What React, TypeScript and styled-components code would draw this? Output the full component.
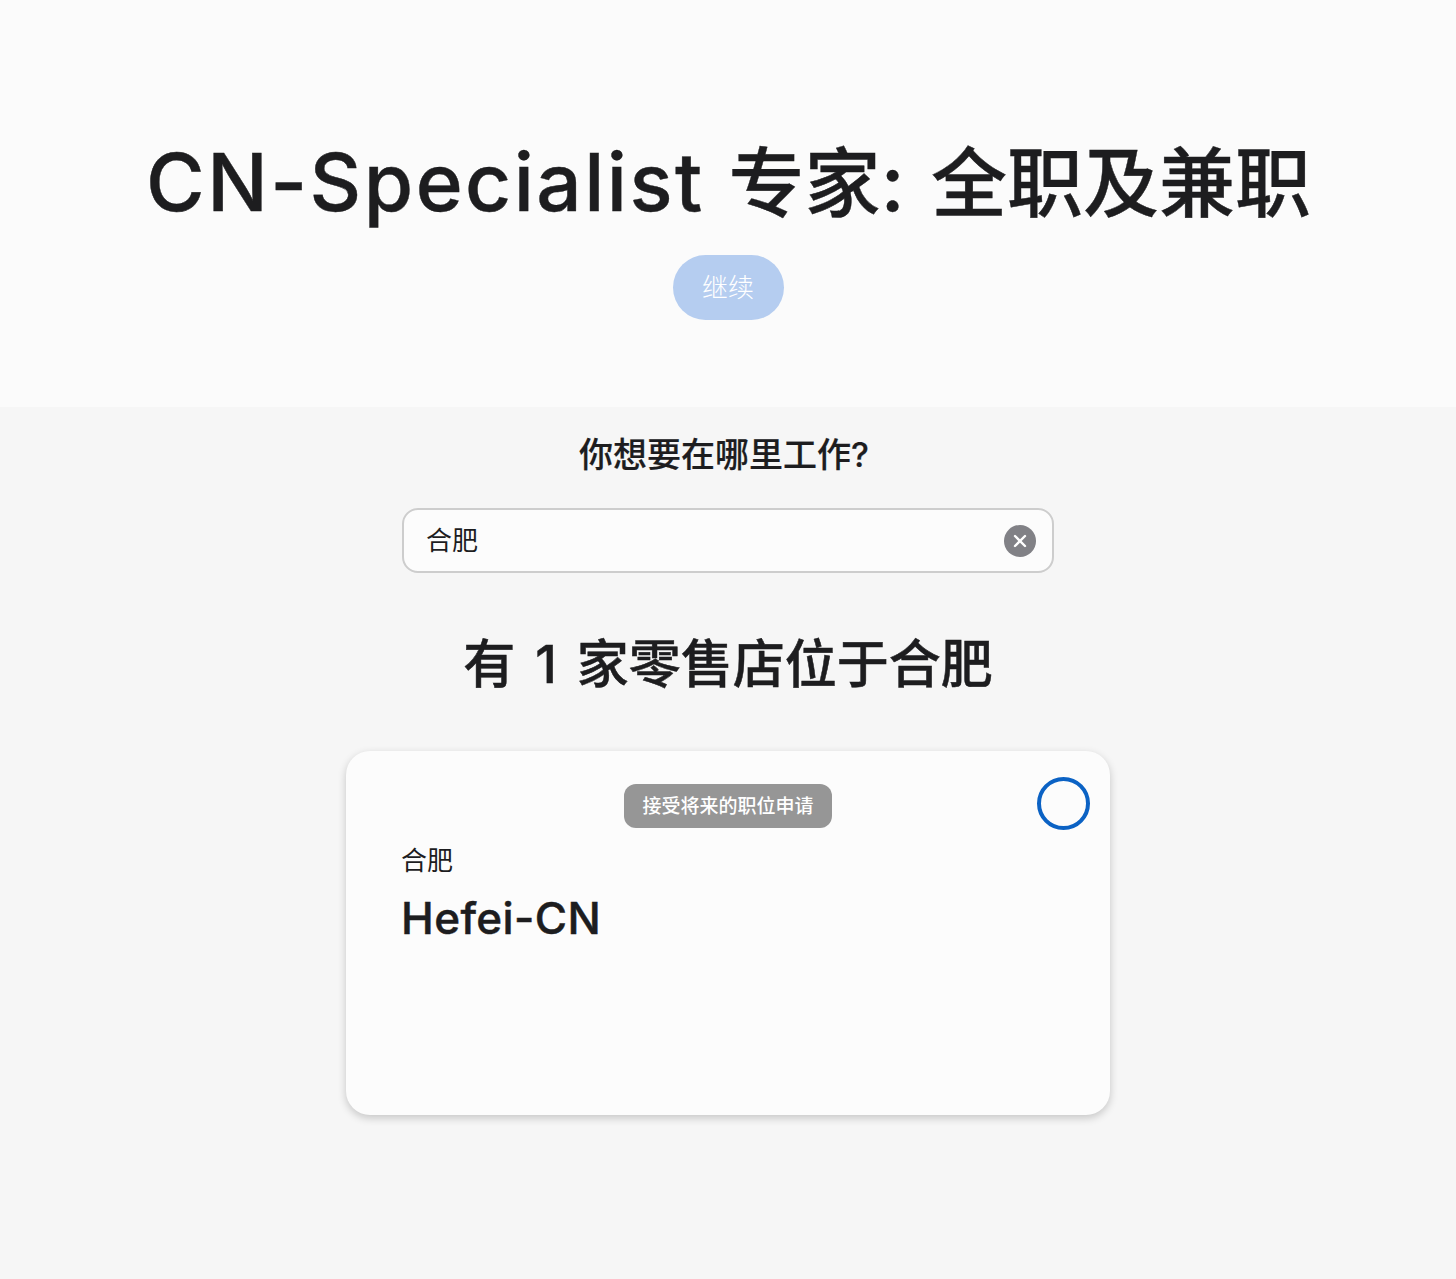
import { createGlobalStyle } from 'styled-components';
import styled from 'styled-components';

const FONT = `Inter, "Noto Sans CJK SC", sans-serif`;

const GlobalStyle = createGlobalStyle`
  html, body {
    margin: 0;
    padding: 0;
    background: #f6f6f6;
    font-family: ${FONT};
    color: #1d1d1f;
  }
`;

const Page = styled.div`
  min-height: 1279px;
  display: flex;
  flex-direction: column;
`;

const Hero = styled.header`
  height: 407px;
  box-sizing: border-box;
  padding-top: 134px;
  background: #fbfbfb;
  display: flex;
  flex-direction: column;
  align-items: center;
`;

const Title = styled.h1`
  margin: 0;
  padding-left: 1px;
  font-size: 80px;
  line-height: 96px;
  font-weight: 500;
  letter-spacing: 2.45px;
  white-space: nowrap;
  -webkit-text-stroke: 0.4px #1d1d1f;
`;

const TitleCjk = styled.span`
  font-size: 76px;
  letter-spacing: 0;
`;

const ContinueButton = styled.button`
  margin-top: 24px;
  width: 111px;
  height: 65px;
  padding: 0 0 4px;
  border: 0;
  border-radius: 33px;
  background: #b5cdf0;
  color: #fff;
  font-family: ${FONT};
  font-size: 26px;
  font-weight: 300;
`;

const Main = styled.main`
  display: flex;
  flex-direction: column;
  align-items: center;
  padding-top: 26px;
`;

const Question = styled.h2`
  margin: 0;
  padding-right: 8px;
  font-size: 34px;
  line-height: 44px;
  font-weight: 500;
  -webkit-text-stroke: 0.2px #1d1d1f;
`;

const SearchBox = styled.div`
  margin-top: 31px;
  width: 652px;
  height: 65px;
  box-sizing: border-box;
  padding: 0 16px 0 22px;
  display: flex;
  align-items: center;
  justify-content: space-between;
  background: #fcfcfc;
  border: 2px solid #cdcdcd;
  border-radius: 16px;
`;

const SearchValue = styled.span`
  padding-bottom: 4px;
  font-size: 26px;
  font-weight: 400;
  color: #1d1d1f;
`;

const ClearButton = styled.span`
  width: 32px;
  height: 32px;
  border-radius: 50%;
  background: #818186;
  display: flex;
  align-items: center;
  justify-content: center;
`;

const ResultCount = styled.h2`
  margin: 57px 0 0;
  font-size: 52px;
  line-height: 70px;
  font-weight: 500;
  word-spacing: 6px;
  -webkit-text-stroke: 0.5px #1d1d1f;
`;

const StoreCard = styled.article`
  position: relative;
  margin-top: 51px;
  width: 764px;
  height: 364px;
  box-sizing: border-box;
  padding: 33px 55px;
  background: #fcfcfc;
  border-radius: 24px;
  box-shadow: 0 3px 8px rgba(0, 0, 0, 0.2);
`;

const BadgeRow = styled.div`
  display: flex;
  justify-content: center;
`;

const Badge = styled.span`
  width: 208px;
  height: 44px;
  padding-bottom: 4px;
  box-sizing: border-box;
  border-radius: 12px;
  background: #969696;
  color: #fff;
  font-size: 19px;
  font-weight: 500;
  display: flex;
  align-items: center;
  justify-content: center;
`;

const Radio = styled.span`
  position: absolute;
  top: 26px;
  right: 20px;
  width: 53px;
  height: 53px;
  box-sizing: border-box;
  border: 4px solid #0b62c4;
  border-radius: 50%;
`;

const City = styled.div`
  margin-top: 14px;
  font-size: 26px;
  line-height: 38px;
`;

const StoreName = styled.div`
  margin-top: 8px;
  font-size: 44px;
  line-height: 60px;
  font-weight: 500;
  letter-spacing: 0.4px;
  -webkit-text-stroke: 0.5px #1d1d1f;
`;

export default function App() {
  return (
    <Page>
      <GlobalStyle />
      <Hero>
        <Title>
          CN-Specialist <TitleCjk>专家</TitleCjk>: <TitleCjk>全职及兼职</TitleCjk>
        </Title>
        <ContinueButton>继续</ContinueButton>
      </Hero>
      <Main>
        <Question>你想要在哪里工作?</Question>
        <SearchBox>
          <SearchValue>合肥</SearchValue>
          <ClearButton>
            <svg width="14" height="14" viewBox="0 0 14 14" fill="none">
              <path d="M2 2l10 10M12 2L2 12" stroke="#fff" strokeWidth="2.4" strokeLinecap="round" />
            </svg>
          </ClearButton>
        </SearchBox>
        <ResultCount>有 1 家零售店位于合肥</ResultCount>
        <StoreCard>
          <BadgeRow>
            <Badge>接受将来的职位申请</Badge>
          </BadgeRow>
          <Radio />
          <City>合肥</City>
          <StoreName>Hefei-CN</StoreName>
        </StoreCard>
      </Main>
    </Page>
  );
}
